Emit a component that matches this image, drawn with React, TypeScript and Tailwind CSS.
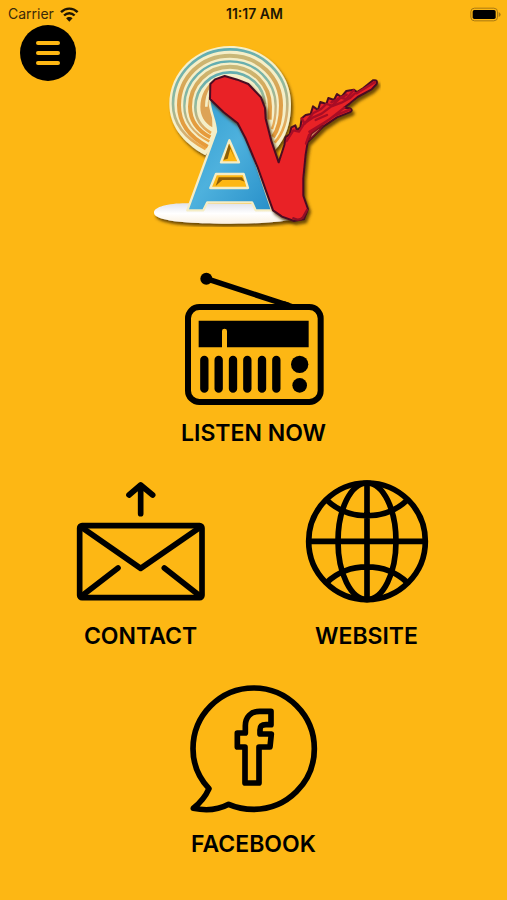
import type { ReactNode } from "react";

function WifiIcon() {
  return (
    <svg viewBox="186 16 56 44" className="h-[15px] w-[19px]" fill="none" stroke="#1f1603" strokeWidth="7" aria-hidden="true">
      <path d="M189 31C203 17 224 17 238 31" />
      <path d="M198 41C207 32 220 32 229 41" />
      <path d="M204 49C209 44 218 44 223 49L213.500 59Z" fill="#1f1603" stroke="none" />
    </svg>
  );
}

function BatteryIcon() {
  return (
    <svg viewBox="0 0 93 45" className="h-[15px] w-[31px]" role="img" aria-label="Battery full">
      <rect x="2.500" y="3.500" width="80" height="38" rx="11" fill="none" stroke="#a97a12" strokeWidth="3" />
      <rect x="8" y="9" width="69" height="27" rx="5" fill="#000" />
      <path d="M86 15Q92 18 92 22.500Q92 27 86 30Z" fill="#a97a12" />
    </svg>
  );
}

function Logo() {
  return (
    <svg viewBox="-39 42 762 558" className="h-[186px] w-[254px]" role="img" aria-label="AV">
      <defs>
        <linearGradient id="ring" x1="0" y1="0" x2="0.2" y2="1">
          <stop offset="0" stopColor="#58abb5" />
          <stop offset="0.5" stopColor="#8fb9a0" />
          <stop offset="0.85" stopColor="#d9b070" />
          <stop offset="1" stopColor="#eda545" />
        </linearGradient>
        <linearGradient id="gold" x1="0" y1="0" x2="0" y2="1">
          <stop offset="0" stopColor="#c9b878" />
          <stop offset="0.45" stopColor="#dda04a" />
          <stop offset="1" stopColor="#e79a3a" />
        </linearGradient>
        <linearGradient id="tower" x1="0" y1="0" x2="1" y2="1">
          <stop offset="0" stopColor="#2f9bd0" />
          <stop offset="0.5" stopColor="#4eb1dd" />
          <stop offset="1" stopColor="#278fc9" />
        </linearGradient>
        <linearGradient id="base" x1="0" y1="0" x2="0" y2="1">
          <stop offset="0" stopColor="#e1e3ec" />
          <stop offset="0.5" stopColor="#ffffff" />
          <stop offset="1" stopColor="#fbf0df" />
        </linearGradient>
        <filter id="shadow" x="-10%" y="-10%" width="125%" height="125%">
          <feDropShadow dx="6" dy="9" stdDeviation="4" floodColor="#4b3000" floodOpacity="0.8" />
        </filter>
      </defs>

      <g filter="url(#shadow)">
        <path d="M196 376C125 336 88 284 88 222C88 127 168 48 270 48C373 48 453 127 453 222C453 275 439 325 405 360L300 250Z" fill="#f5efc8" />
      </g>
      <g fill="none">
        <path d="M197 357C135 325 99 278 99 222C99 132 174 58 270 58C366 58 442 132 442 222C442 269 430 309 404 338" stroke="url(#ring)" strokeWidth="8" />
        <path d="M203 350C148 321 117 279 117 226C117 142 184 77 270 77C356 77 423 142 423 226C423 263 416 297 399 321" stroke="url(#gold)" strokeWidth="12" />
        <path d="M208 334C160 311 133 273 133 228C133 153 193 94 270 94C347 94 407 153 407 228C407 253 404 277 396 297" stroke="url(#ring)" strokeWidth="7" />
        <path d="M211 322C170 300 150 268 150 230C150 164 202 110 270 110C338 110 390 164 390 230L389 269" stroke="url(#gold)" strokeWidth="12" />
        <path d="M213 309C182 291 166 263 166 232C166 173 212 127 270 127C327 127 372 169 375 223" stroke="url(#ring)" strokeWidth="8" />
        <path d="M217 292C192 278 181 256 181 232C181 197 198 166 225 148L216 220Z" fill="#dda356" />
        <path d="M199 230C199 207 204 189 214 174" stroke="#f5efc8" strokeWidth="8" />
      </g>

      <g filter="url(#shadow)">
        <path d="M42 548C42 529 91 518 151 520L400 522L465 567C417 577 360 581 272 581C130 581 42 571 42 548Z" fill="url(#base)" />
      </g>
      <path
        fillRule="evenodd"
        d="M209 207L220 190L310 286L396 541H347L336 517H202L190 541H142L228 305C227 266 207 244 209 207ZM268 331L243 397H297ZM228 432L211 474H324L311 432Z"
        fill="url(#tower)"
        stroke="#f5edc5"
        strokeWidth="7"
        strokeLinejoin="round"
      />
      <path d="M267 341L251 390L263 386L271 356L286 390ZM227 468L236 442H306L314 455L300 450H247Z" fill="#8e5f08" />

      <g filter="url(#shadow)" strokeLinejoin="round" strokeLinecap="round">
        <path
          d="M210 207L211 162L225 148L254 138L292 149L325 162L363 202L375 234L377 266L394 333L416 397L433 345L437 321L449 313L454 292L466 286L471 301L481 292L485 265L497 255L512 252L519 229L534 240L541 216L559 222L565 204L582 210L591 192L604 201L619 183L641 179L651 186L670 174L699 151Q714 148 710 162L695 178L653 201L630 220L613 233L630 235Q641 241 629 247L591 262L551 289L503 337L497 373L490 444V497L504 537L492 568L462 573L426 560L399 541L381 491L353 412L316 324L293 280L251 247Z"
          fill="#e92027"
          stroke="#4a0b20"
          strokeWidth="6"
        />
      </g>
      <g fill="none" stroke="#a80d25" strokeWidth="7" strokeLinecap="round" strokeLinejoin="round">
        <path d="M440 333L460 301L477 305L493 280L518 263L545 251L574 229L604 218L629 205L645 190" />
        <path d="M485 265L494 281L519 250L542 238L559 222L577 227L601 203L619 207L641 181" />
        <path d="M508 305L551 279L571 266L613 233M498 341L507 315L538 290L582 258L629 239" />
        <path d="M527 270L561 255M574 217L620 194M650 190L704 157" />
      </g>
      <path d="M507 330L515 311L549 286L538 300Z" fill="#c98662" stroke="#7c101d" strokeWidth="4" />
      <path d="M460 565Q477 574 489 562L501 540" fill="none" stroke="#8e1026" strokeWidth="7" strokeLinecap="round" />
    </svg>
  );
}

function RadioIcon() {
  return (
    <svg viewBox="39 30 426 411" className="h-[137px] w-[142px]" aria-hidden="true">
      <rect x="54" y="141" width="398" height="285" rx="34" fill="none" stroke="#000" strokeWidth="18" />
      <circle cx="109" cy="56" r="18" />
      <path d="M109 56L357 137" stroke="#000" strokeWidth="17" />
      <path d="M322 133L344 124L387 139Z" />
      <path d="M86 182H416V262H171V213Q171 206 163.500 206Q156 206 156 213V262H86Z" />
      <path d="M103 300V386M146 300V386M189 300V386M232 300V386M276 300V386M319 300V386" stroke="#000" strokeWidth="25" strokeLinecap="round" />
      <circle cx="389" cy="313" r="26" />
      <circle cx="389" cy="376" r="22" />
    </svg>
  );
}

function ContactIcon() {
  return (
    <svg viewBox="48 27 390 381" className="h-[127px] w-[130px]" fill="none" stroke="#000" strokeWidth="17" strokeLinecap="round" strokeLinejoin="round" aria-hidden="true">
      <path d="M242 131V45M207 75L242 45L278 75" />
      <rect x="59" y="167" width="367" height="216" rx="7" />
      <path d="M65 172L242 295L420 172M65 378L174 294M420 378L313 294" />
    </svg>
  );
}

function GlobeIcon() {
  return (
    <svg viewBox="42 27 378 381" className="h-[127px] w-[126px]" fill="none" stroke="#000" strokeWidth="17" aria-hidden="true">
      <circle cx="231" cy="214" r="175" />
      <ellipse cx="231" cy="214" rx="87" ry="175" />
      <path d="M231 39V389M56 214H406M110 90C176 153 286 153 352 90M110 338C176 275 286 275 352 338" />
    </svg>
  );
}

function FacebookIcon() {
  return (
    <svg viewBox="57 21 390 396" className="h-[132px] w-[130px]" fill="none" stroke="#000" strokeWidth="17" strokeLinejoin="round" aria-hidden="true">
      <path d="M117 341C86 308 69 268 69 221A182 182 0 0 1 251 39A182 182 0 0 1 433 221A182 182 0 0 1 251 403C224 403 199 398 176 388C148 403 108 408 70 400C89 385 105 368 117 341Z" />
      <path d="M303 109H269C242 109 226 127 226 152V174H202V216H225V324H267V216H300L304 177H270V165C270 154 275 149 288 149H303Z" />
    </svg>
  );
}

function Tile({ label, gap = "gap-4", children }: { label: string; gap?: string; children: ReactNode }) {
  return (
    <button type="button" className={`flex flex-col items-center ${gap}`}>
      {children}
      <span className="text-[23px] leading-7 font-semibold whitespace-nowrap">{label}</span>
    </button>
  );
}

export default function App() {
  return (
    <div className="min-h-screen bg-[#fdb714] pb-10 font-['Inter',sans-serif] text-black">
      <div className="grid h-[25px] grid-cols-[1fr_auto_1fr] items-center pt-[3px] pr-1.5 pl-2 leading-5">
        <div className="flex items-center gap-1.5 text-sm text-[#3b2a08]">
          <span>Carrier</span>
          <WifiIcon />
        </div>
        <time className="text-sm font-semibold text-[#1f1603]">11:17 AM</time>
        <div className="flex justify-end">
          <BatteryIcon />
        </div>
      </div>

      <header className="grid grid-cols-[1fr_auto_1fr] items-start">
        <button type="button" aria-label="Menu" className="ml-5 flex size-14 flex-col items-center justify-center gap-1.5 rounded-full bg-black">
          <span className="h-1 w-6 rounded-full bg-[#fdb714]" />
          <span className="h-1 w-6 rounded-full bg-[#fdb714]" />
          <span className="h-1 w-6 rounded-full bg-[#fdb714]" />
        </button>
        <div className="pt-[19px]">
          <Logo />
        </div>
      </header>

      <main className="mt-10 flex flex-col items-center gap-8">
        <Tile label="LISTEN NOW" gap="gap-3">
          <RadioIcon />
        </Tile>
        <div className="grid w-full max-w-[452px] grid-cols-2 justify-items-center">
          <Tile label="CONTACT">
            <ContactIcon />
          </Tile>
          <Tile label="WEBSITE">
            <GlobeIcon />
          </Tile>
        </div>
        <Tile label="FACEBOOK">
          <FacebookIcon />
        </Tile>
      </main>
    </div>
  );
}
